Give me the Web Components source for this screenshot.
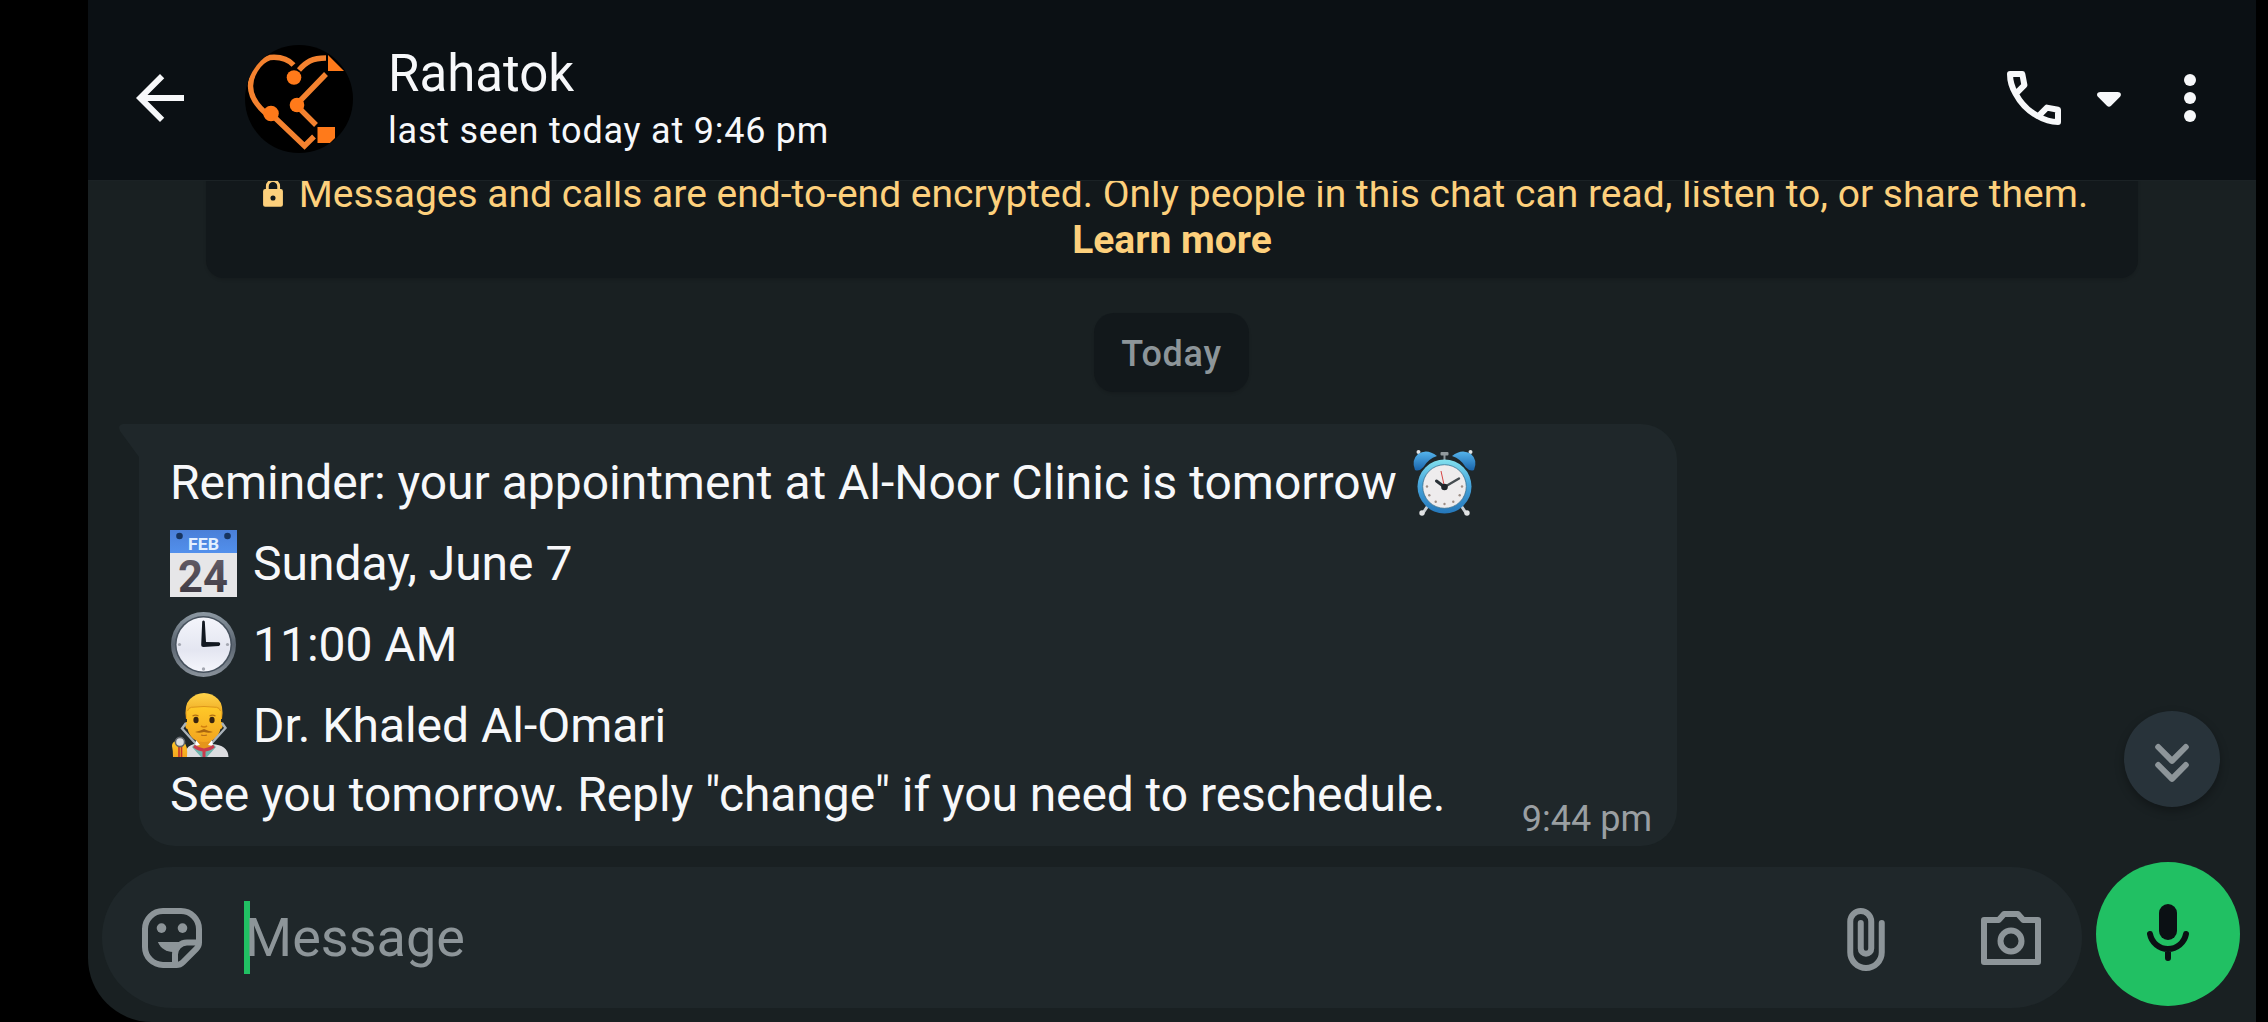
<!DOCTYPE html>
<html lang="en">
<head>
<meta charset="utf-8">
<title>Chat</title>
<style>
    html, body {
        margin: 0;
        height: 100%;
        background: #000;
        overflow: hidden;
    }
    body {
        font-family: Roboto, "Liberation Sans", sans-serif;
        color: #f7f8fa;
    }
</style>
</head>
<body>
<chat-screen>
    <chat-header slot="header" name="Rahatok" status="last seen today at 9:46 pm"></chat-header>
    <encryption-notice>
        Messages and calls are end-to-end encrypted. Only people in this chat can read, listen to, or share them.
        <span slot="link">Learn more</span>
    </encryption-notice>
    <date-chip>Today</date-chip>
    <message-bubble time="9:44 pm">
        <message-line>Reminder: your appointment at Al-Noor Clinic is tomorrow<emoji-icon slot="after" name="alarm"></emoji-icon></message-line>
        <message-line><emoji-icon slot="before" name="calendar"></emoji-icon>Sunday, June 7</message-line>
        <message-line><emoji-icon slot="before" name="clock"></emoji-icon>11:00 AM</message-line>
        <message-line><emoji-icon slot="before" name="doctor"></emoji-icon>Dr. Khaled Al-Omari</message-line>
        <message-line last>See you tomorrow. Reply "change" if you need to reschedule.</message-line>
    </message-bubble>
    <jump-button slot="overlay"></jump-button>
    <message-composer slot="footer" placeholder="Message"></message-composer>
</chat-screen>

<script>
    function define(name, render)
    {
        customElements.define(name, class extends HTMLElement {
            connectedCallback() {
                if (this.shadowRoot)
                    return;
                const shadow = this.attachShadow({ mode: 'open' });
                shadow.innerHTML = render(this);
            }
        });
    }

    const icons = {
        back: '<path fill="currentColor" d="M20 11H7.83l5.59-5.59L12 4l-8 8 8 8 1.41-1.41L7.83 13H20z"/>',
        call: '<path fill="none" stroke="currentColor" stroke-width="2" stroke-linejoin="round" d="M4 4h4.1l.7 3.7-2.9 2.9C4.6 8.500 4 6.100 4 4zM13.400 18.100l2.900-2.900 3.700.7V20c-2.300 0-4.500-.6-6.600-1.900zM5.900 10.600c1.700 3.200 4.100 5.700 7.500 7.500"/>',
        caret: '<path fill="currentColor" d="M9.100 10h5.800c1.100 0 1.400 1 .7 1.700l-2.900 2.900q-.7.7-1.400 0l-2.900-2.900C7.700 11 8 10 9.100 10z"/>',
        menu: '<g fill="currentColor"><circle cx="12" cy="6" r="2"/><circle cx="12" cy="12" r="2"/><circle cx="12" cy="18" r="2"/></g>',
        sticker: '<g fill="none" stroke="currentColor" stroke-width="2"><path d="M9 3h6a6 6 0 0 1 6 6v4.500c0 .8-.3 1.500-.9 2.100l-4.500 4.500c-.6.600-1.300.9-2.100.9H9a6 6 0 0 1-6-6V9a6 6 0 0 1 6-6z"/><path d="M13 20.500V17.500a4 4 0 0 1 4-4h3.500"/></g><g fill="currentColor"><circle cx="8.500" cy="8.700" r="1.600"/><circle cx="15.500" cy="8.700" r="1.600"/><path d="M7.300 13.300h8.200l-2.500 3.300c-2.500.3-4.700-1-5.700-3.300z"/></g>',
        clip: '<path fill="none" stroke="currentColor" stroke-width="2" stroke-linecap="round" d="M17.250 7v9.750a5.250 5.250 0 0 1-10.500 0V6.500a3.500 3.500 0 0 1 7 0v9a1.750 1.750 0 0 1-3.500 0V7"/>',
        camera: '<g fill="none" stroke="currentColor" stroke-width="2" stroke-linejoin="round"><path d="M3 6h4.900l1.800-2h4.600l1.800 2H21v14H3z"/><circle cx="12" cy="13" r="3.500"/></g>',
        mic: '<g transform="translate(0 -.5)"><rect x="9" y="2.500" width="6" height="12" rx="3" fill="currentColor"/><path fill="none" stroke="currentColor" stroke-width="2" stroke-linecap="round" d="M6 12.500a6.100 6.100 0 0 0 12 0M12 18v2.500"/></g>',
        down: '<path fill="none" stroke="currentColor" stroke-width="2" stroke-linecap="round" stroke-linejoin="round" d="M7.400 8l4.600 4.600L16.600 8M7.400 14l4.600 4.600L16.600 14"/>',
        lock: '<path fill="none" stroke="currentColor" stroke-width="2" d="M8 9V6.500a4 4 0 0 1 8 0V9"/><path fill="currentColor" fill-rule="evenodd" d="M6.500 8.500h11A1.500 1.500 0 0 1 19 10v9.500a1.500 1.500 0 0 1-1.500 1.500h-11A1.500 1.500 0 0 1 5 19.500V10a1.500 1.500 0 0 1 1.500-1.500zM12 13a1.800 1.800 0 1 0 0 3.600 1.800 1.800 0 0 0 0-3.600z"/>'
    };

    const emoji = {
        calendar: `
            <defs>
                <linearGradient id="top" x2="0" y2="1"><stop stop-color="#4a7fd8"/><stop offset="1" stop-color="#5290ec"/></linearGradient>
                <linearGradient id="num" x2="0" y2="1"><stop stop-color="#6a6570"/><stop offset="1" stop-color="#37323b"/></linearGradient>
            </defs>
            <rect width="67" height="67" fill="#e6e6e8"/>
            <rect width="67" height="23" fill="url(#top)"/>
            <circle cx="9.500" cy="6" r="3.300" fill="#17345f"/><circle cx="57.500" cy="6" r="3.300" fill="#17345f"/>
            <text x="33.500" y="20" text-anchor="middle" font-size="17" font-weight="700" fill="#e4f0ff" textLength="31" lengthAdjust="spacingAndGlyphs">FEB</text>
            <text x="33" y="61.500" text-anchor="middle" font-size="45" font-weight="700" fill="url(#num)" textLength="50" lengthAdjust="spacingAndGlyphs">24</text>`,
        clock: `
            <defs>
                <linearGradient id="rim" x2="0" y2="1"><stop stop-color="#8d99a3"/><stop offset=".5" stop-color="#5a646f"/><stop offset="1" stop-color="#8a939c"/></linearGradient>
                <linearGradient id="face" x2="0" y2="1"><stop stop-color="#f4f5fb"/><stop offset=".6" stop-color="#e4e6f1"/><stop offset="1" stop-color="#f5f6fc"/></linearGradient>
            </defs>
            <circle cx="33.500" cy="33.500" r="32.500" fill="url(#rim)"/>
            <circle cx="33.500" cy="33.500" r="28.500" fill="#46515d"/>
            <circle cx="33.500" cy="33.500" r="27" fill="url(#face)"/>
            <g fill="#a5a8b2"><circle cx="9.500" cy="33.500" r="1.600"/><circle cx="57.500" cy="33.500" r="1.600"/><circle cx="33.500" cy="58" r="1.700"/></g>
            <path d="M32.200 10.500q1.300-2 2.600 0l1.200 20.500 13 .3q2.500 1.700 0 3.700L33.500 36q-2.400 0-2.300-2.500z" fill="#121820"/>`,
        doctor: `
            <defs>
                <linearGradient id="skin" x2="0" y2="1"><stop stop-color="#ffc928"/><stop offset="1" stop-color="#f3a51f"/></linearGradient>
                <linearGradient id="hair" x2="0" y2="1"><stop stop-color="#ffd34a"/><stop offset="1" stop-color="#eaa018"/></linearGradient>
            </defs>
            <path d="M16 65V59q1-5 8-7l9-3 9 3q16 1 16.500 13z" fill="#dcdde0"/>
            <path d="M27 46h14v9l-7 7-7-7z" fill="#e5951c"/>
            <path d="M25 52l9 9 9-9 3 3-9 10h-6l-9-10z" fill="#6fb5ad"/>
            <path d="M16 27q-2-14 4-20Q26 1 34 1t14 6q6 6 4 20z" fill="url(#hair)"/>
            <path d="M17 20q1-4 4-4.500 13-2 26 0 3 .5 4 4.500v10q3 0 1.500 5-.5 2-2 2Q47 50 34 50T17.500 37q-1.500 0-2-2Q14 30 17 30z" fill="url(#skin)"/>
            <path d="M17.500 19q1-3.300 4-3.700 12.500-1.600 25 0 3 .4 4 3.700" fill="none" stroke="#dc951b" stroke-width="1"/>
            <path d="M22.500 24q3-1.600 6 0M39.500 24q3-1.600 6 0" fill="none" stroke="#b36f12" stroke-width="1.200"/>
            <ellipse cx="26" cy="28" rx="2.600" ry="3.200" fill="#38230f"/><ellipse cx="42" cy="28" rx="2.600" ry="3.200" fill="#38230f"/>
            <path d="M31 34q3 2 6 0" fill="none" stroke="#d28010" stroke-width="1.600"/>
            <path d="M25 40q5-1 9-3 4 2 9 3-4 1.600-9 0-5 1.600-9 0z" fill="#a9650f"/>
            <path d="M31 43q3 1 6 0" fill="none" stroke="#b8701a" stroke-width="1.200"/>
            <path d="M16 31l-4 5.500L26 52M52 31l3.500 5L41 52" fill="none" stroke="#aab3ba" stroke-width="2.400"/>
            <path d="M26 48l-1 6 5-1zM42 48l1 6-5-1z" fill="#fff"/>
            <path d="M24 54q10 8 20 0M34 58v7" fill="none" stroke="#c93b4e" stroke-width="3"/>
            <path d="M3 65q0-7-1-11 0-4 4-5l8 1q4 4 3 15z" fill="url(#skin)"/>
            <path d="M9 53v12M11.500 53v12" stroke="#c4302b" stroke-width="1.600"/>
            <circle cx="10" cy="50" r="4.600" fill="#dadde0" stroke="#60656b" stroke-width="1.600"/>`,
        alarm: `
            <defs>
                <linearGradient id="bell" x2="0" y2="1"><stop stop-color="#55b4ec"/><stop offset="1" stop-color="#1863ab"/></linearGradient>
                <linearGradient id="body" x2="0" y2="1"><stop stop-color="#82e1ee"/><stop offset=".45" stop-color="#48a6dc"/><stop offset="1" stop-color="#2577ba"/></linearGradient>
            </defs>
            <g stroke="#c9ced1" stroke-width="3" stroke-linecap="round"><path d="M16 58l-4 6M51 58l4 6"/></g>
            <g fill="#e1e3e4"><circle cx="11" cy="64" r="2.700"/><circle cx="56" cy="64" r="2.700"/><circle cx="7.500" cy="3" r="2"/><circle cx="59.500" cy="3" r="2"/></g>
            <g fill="url(#bell)"><path d="M4 21Q0 11 7 5q9-6 19 2Q17 10 12.500 18 8 23 4 21z"/><path d="M63 21q4-10-3-16-9-6-19 2 9 3 13.500 11 4.500 5 8.500 3z"/></g>
            <path d="M33.500 5v8" stroke="#8b9398" stroke-width="2"/><rect x="29.500" y="3" width="8" height="3.500" rx="1" fill="#929a9d"/>
            <circle cx="33.500" cy="37.500" r="27" fill="url(#body)"/>
            <circle cx="33.500" cy="37.500" r="21.800" fill="#eeeced"/>
            <circle cx="33.500" cy="37.500" r="21.800" fill="none" stroke="#3b718f" stroke-width=".8"/>
            <g fill="#9c8d85"><circle cx="33.500" cy="55" r="1.200"/><circle cx="24.700" cy="52.700" r="1.200"/><circle cx="42.300" cy="52.700" r="1.200"/><circle cx="18.300" cy="46.300" r="1.200"/><circle cx="48.700" cy="46.300" r="1.200"/><circle cx="16" cy="37.500" r="1.200"/><circle cx="51" cy="37.500" r="1.200"/></g>
            <path d="M33.500 38L30 22" stroke="#d64545" stroke-width="1"/>
            <path d="M33.500 38l-8-6" stroke="#293036" stroke-width="3" stroke-linecap="round"/>
            <path d="M33.500 38l14.500-8.500" stroke="#454c50" stroke-width="2.400" stroke-linecap="round"/>
            <circle cx="33.500" cy="38" r="3.300" fill="#20252a"/>`
    };

    define('ui-icon', el => `
        <style>
            :host { display: block; flex: none; width: 72px; height: 72px; }
            svg { display: block; width: 100%; height: 100%; overflow: visible; }
        </style>
        <svg viewBox="0 0 24 24">${icons[el.getAttribute('name')]}</svg>`);

    define('emoji-icon', el => `
        <style>
            :host { display: block; flex: none; width: 67px; height: 67px; letter-spacing: 0; }
            svg { display: block; width: 100%; height: 100%; overflow: visible; }
        </style>
        <svg viewBox="0 0 67 67">${emoji[el.getAttribute('name')]}</svg>`);

    define('contact-avatar', () => `
        <style>
            :host { display: block; flex: none; width: 108px; height: 108px; border-radius: 50%; background: #000; overflow: hidden; }
            svg { display: block; }
        </style>
        <svg width="108" height="108" viewBox="0 0 108 108">
            <g fill="none" stroke="#f4822f" stroke-width="5.400">
                <path d="M48.500 20C43 14 36 11.500 25 12.500 12 17 5.500 32 5.500 41c0 11 6 19 15 27"/>
                <path d="M54 25c7-8 13-12 27-12"/>
                <path d="M81 29L51 60l20 20"/>
                <path d="M26 69l33.500 32L69 91.500"/>
            </g>
            <g fill="#ff7a1a">
                <circle cx="49" cy="32.500" r="7.300"/><circle cx="52" cy="60" r="7.300"/><circle cx="26" cy="68.500" r="7.800"/>
                <path d="M83 10l16 16H83z"/>
                <path d="M72.500 82H90v11l-5 5H72.500z"/>
            </g>
        </svg>`);

    define('chat-header', el => `
        <style>
            :host {
                display: flex;
                align-items: center;
                box-sizing: border-box;
                height: 181px;
                padding: 16px 30px 0 36px;
                background: #0b1014;
                border-bottom: 1px solid #1b2225;
            }
            contact-avatar { margin: 1px 35px 0 49px; }
            .who { flex: 1; display: flex; flex-direction: column; padding-top: 1px; }
            .name { font-size: 51px; line-height: 60px; }
            .status { font-size: 36px; line-height: 46px; margin-top: 4px; letter-spacing: 0.77px; }
            .caret { margin: 0 9px 0 3px; }
        </style>
        <ui-icon name="back"></ui-icon>
        <contact-avatar></contact-avatar>
        <div class="who">
            <span class="name">${el.getAttribute('name')}</span>
            <span class="status">${el.getAttribute('status')}</span>
        </div>
        <ui-icon name="call"></ui-icon>
        <ui-icon class="caret" name="caret"></ui-icon>
        <ui-icon name="menu"></ui-icon>`);

    define('encryption-notice', () => `
        <style>
            :host {
                display: flex;
                flex-direction: column;
                align-items: center;
                box-sizing: border-box;
                width: 1932px;
                height: 107px;
                margin-top: -10px;
                border-radius: 0 0 18px 18px;
                background: #12181b;
                color: #fdd07c;
                font-size: 39px;
                line-height: 46px;
                white-space: nowrap;
                box-shadow: 0 2px 3px rgba(0, 0, 0, .12);
            }
            .line { display: flex; align-items: center; gap: 9px; }
            ui-icon { width: 34px; height: 34px; }
            b { font-weight: 700; }
        </style>
        <div class="line"><ui-icon name="lock"></ui-icon><span><slot></slot></span></div>
        <b><slot name="link"></slot></b>`);

    define('date-chip', () => `
        <style>
            :host {
                display: block;
                box-sizing: border-box;
                width: 155px;
                height: 79px;
                margin: 35px 1px 0 0;
                border-radius: 20px;
                background: #12181b;
                color: #8d9599;
                font-size: 36px;
                font-weight: 500;
                line-height: 83px;
                letter-spacing: 0.7px;
                text-align: center;
                box-shadow: 0 2px 3px rgba(0, 0, 0, .12);
            }
        </style>
        <slot></slot>`);

    define('message-bubble', el => `
        <style>
            :host {
                display: block;
                position: relative;
                align-self: flex-start;
                box-sizing: border-box;
                width: 1538px;
                height: 422px;
                margin: 32px 0 0 51px;
                padding: 18px 25px 0 31px;
                border-radius: 0 36px 36px 36px;
                background: #1f272a;
            }
            .tail { position: absolute; left: -22px; top: 0; }
            time { position: absolute; right: 25px; bottom: 4px; font-size: 36px; line-height: 46px; color: #9a9fa2; }
        </style>
        <svg class="tail" width="24" height="36"><path d="M24 0H6Q0 1 3 7L22 33h2z" fill="#1f272a"/></svg>
        <slot></slot>
        <time>${el.getAttribute('time')}</time>`);

    define('message-line', () => `
        <style>
            :host {
                display: flex;
                align-items: center;
                gap: 16px;
                height: 81px;
                font-size: 48px;
                line-height: 81px;
                white-space: nowrap;
                letter-spacing: -0.02px;
            }
            :host([last]) { height: 57px; line-height: 57px; letter-spacing: -0.08px; }
            ::slotted([slot="after"]) { margin: -1px 0 0 -2px; }
        </style>
        <slot name="before"></slot><span><slot></slot></span><slot name="after"></slot>`);

    define('jump-button', () => `
        <style>
            :host {
                display: flex;
                align-items: center;
                justify-content: center;
                width: 96px;
                height: 96px;
                border-radius: 50%;
                background: #28333a;
                color: #8d9599;
                box-shadow: 0 4px 10px rgba(0, 0, 0, .3);
            }
        </style>
        <ui-icon name="down"></ui-icon>`);

    define('message-composer', el => `
        <style>
            :host { display: flex; align-items: flex-start; gap: 14px; padding: 0 16px 0 14px; }
            .field {
                flex: 1;
                display: flex;
                align-items: center;
                box-sizing: border-box;
                height: 141px;
                margin-top: 5px;
                padding: 0 35px 0 34px;
                border-radius: 71px;
                background: #1f272a;
                color: #8d9599;
            }
            .caret { width: 6px; height: 73px; margin: 0 -5px 0 36px; background: #21c063; }
            .text { flex: 1; font-size: 54px; line-height: 64px; }
            .clip { margin-right: 73px; }
            .mic {
                display: flex;
                align-items: center;
                justify-content: center;
                width: 144px;
                height: 144px;
                border-radius: 50%;
                background: #21c063;
                color: #0b1014;
            }
        </style>
        <div class="field">
            <ui-icon name="sticker"></ui-icon>
            <span class="caret"></span>
            <span class="text">${el.getAttribute('placeholder')}</span>
            <ui-icon class="clip" name="clip"></ui-icon>
            <ui-icon name="camera"></ui-icon>
        </div>
        <div class="mic"><ui-icon name="mic"></ui-icon></div>`);

    define('chat-screen', () => `
        <style>
            :host {
                display: flex;
                flex-direction: column;
                position: relative;
                box-sizing: border-box;
                width: 2168px;
                height: 1022px;
                margin-left: 88px;
                background: #192022;
                border-radius: 0 0 0 64px;
                overflow: hidden;
            }
            main { height: 681px; flex: none; display: flex; flex-direction: column; align-items: center; overflow: hidden; }
            .overlay { position: absolute; right: 36px; top: 711px; }
        </style>
        <slot name="header"></slot>
        <main><slot></slot></main>
        <slot name="footer"></slot>
        <div class="overlay"><slot name="overlay"></slot></div>`);
</script>
</body>
</html>
